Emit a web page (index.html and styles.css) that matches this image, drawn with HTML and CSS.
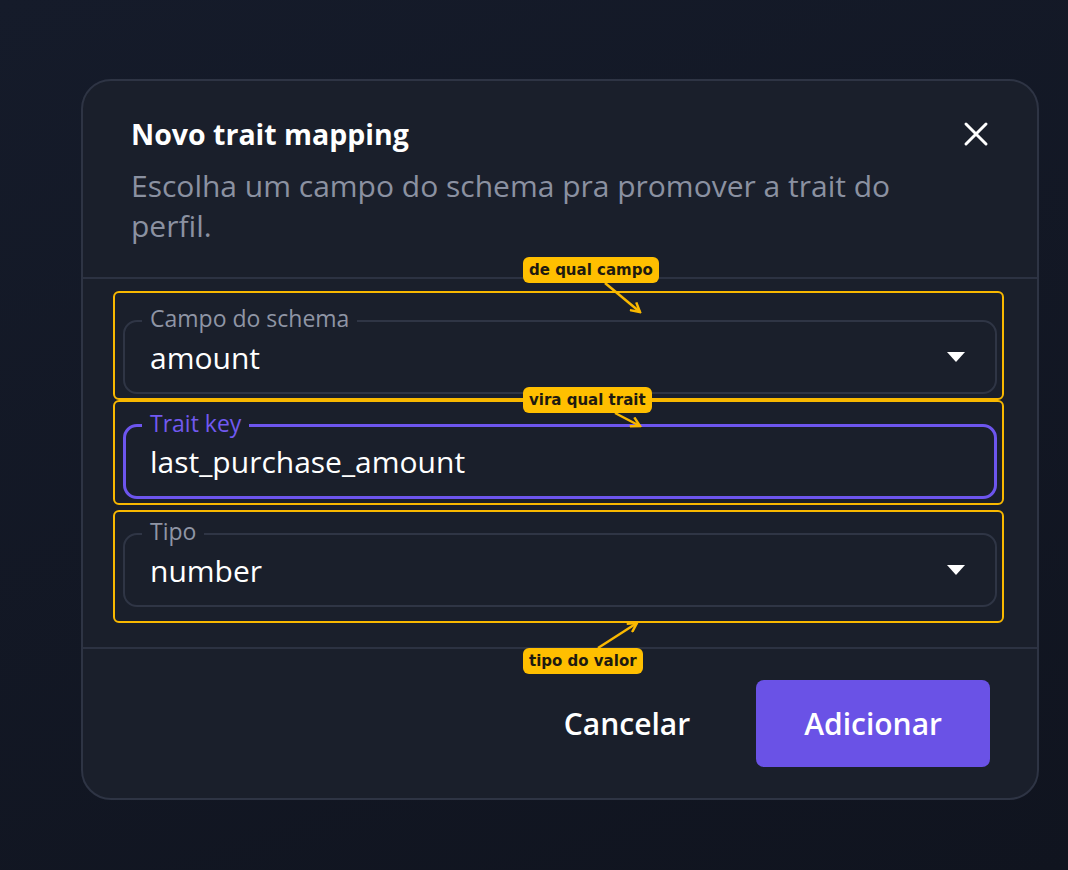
FILE: index.html
```html
<!DOCTYPE html>
<html lang="pt-BR">
<head>
  <meta charset="UTF-8" />
  <meta name="viewport" content="width=device-width, initial-scale=1" />
  <title>Novo trait mapping</title>
  <link rel="stylesheet" href="styles.css">
</head>
<body>
  <div class="dialog">
    <div class="dialog-header">
      <div class="header-text">
        <h2>Novo trait mapping</h2>
        <p>Escolha um campo do schema pra promover a trait do perfil.</p>
      </div>
      <button class="close-btn" aria-label="Fechar">
        <svg width="26" height="26" viewBox="0 0 26 26">
          <path d="M3 3L23 23M23 3L3 23" stroke="#fff" stroke-width="3" stroke-linecap="round" />
        </svg>
      </button>
    </div>

    <div class="dialog-body">
      <div class="highlight first">
        <fieldset class="field">
          <legend>Campo do schema</legend>
          <div class="field-value">amount</div>
          <span class="caret"></span>
        </fieldset>
      </div>

      <div class="highlight second">
        <fieldset class="field focused">
          <legend>Trait key</legend>
          <div class="field-value">last_purchase_amount</div>
        </fieldset>
      </div>

      <div class="highlight third">
        <fieldset class="field">
          <legend>Tipo</legend>
          <div class="field-value">number</div>
          <span class="caret"></span>
        </fieldset>
      </div>
    </div>

    <div class="dialog-footer">
      <button class="btn btn-text">Cancelar</button>
      <button class="btn btn-primary">Adicionar</button>
    </div>

    <!-- annotation layer -->
    <svg class="arrows" width="954" height="717" viewBox="0 0 954 717">
      <defs>
        <marker id="head" markerWidth="12" markerHeight="12" refX="10" refY="6" orient="auto" markerUnits="userSpaceOnUse">
          <path d="M1 1L10 6L1 11" fill="none" stroke="#f9b800" stroke-width="2.5" />
        </marker>
      </defs>
      <line x1="522" y1="202" x2="557" y2="231" stroke="#f9b800" stroke-width="2.5" marker-end="url(#head)" />
      <line x1="532" y1="332" x2="557" y2="345" stroke="#f9b800" stroke-width="2.5" marker-end="url(#head)" />
      <line x1="515" y1="567" x2="554" y2="542" stroke="#f9b800" stroke-width="2.5" marker-end="url(#head)" />
    </svg>
    <span class="note note-1">de qual campo</span>
    <span class="note note-2">vira qual trait</span>
    <span class="note note-3">tipo do valor</span>
  </div>
</body>
</html>
```

FILE: styles.css
```css
html, body {
  margin: 0;
  padding: 0;
}
body {
  font-family: 'Open Sans', 'Noto Sans', sans-serif;
  background: linear-gradient(160deg, #151b2a, #10141f);
  min-height: 870px;
  padding: 79px 0 0 81px;
  box-sizing: border-box;
  color: #fff;
}
.dialog {
  position: relative;
  width: 958px;
  height: 721px;
  box-sizing: border-box;
  background: #1a1f2b;
  border: 2px solid #2e3444;
  border-radius: 30px;
  display: flex;
  flex-direction: column;
}
.dialog-header {
  display: flex;
  justify-content: space-between;
  align-items: flex-start;
  padding: 36px 48px 30px 48px;
  height: 196px;
  box-sizing: border-box;
}
.header-text h2 {
  margin: 0 0 15px;
  font-size: 28.5px;
  line-height: 34px;
  font-weight: 700;
}
.header-text p {
  margin: 0;
  max-width: 800px;
  font-size: 30px;
  line-height: 40px;
  color: #8b91a1;
}
.close-btn {
  background: none;
  border: none;
  padding: 0;
  margin-top: 4px;
  cursor: pointer;
}
.dialog-body {
  border-top: 2px solid #2c3242;
  border-bottom: 2px solid #2c3242;
  height: 372px;
  box-sizing: border-box;
  padding: 12px 33px 0 30px;
}
.highlight {
  border: 2px solid #f9b800;
  border-radius: 6px;
  padding: 0 5px 0 8px;
}
.highlight.first {
  padding-top: 14px;
  padding-bottom: 4px;
}
.highlight.second {
  margin-top: 0;
  padding-top: 10px;
  padding-bottom: 4px;
}
.highlight.third {
  margin-top: 5px;
  padding-top: 8px;
  padding-bottom: 14px;
}
.field {
  margin: 0;
  border: 2px solid #2f3545;
  border-radius: 14px;
  padding: 0 30px 0 17px;
  height: 87px;
  box-sizing: border-box;
  display: flex;
  align-items: center;
  justify-content: space-between;
}
.field legend {
  padding: 0 8px 5px;
  font-size: 23px;
  line-height: 22px;
  color: #8f95a5;
}
.field.focused {
  border: 3px solid #6d55ee;
  padding-left: 16px;
}
.field.focused legend {
  color: #7159f0;
}
.field-value {
  padding-left: 8px;
  font-size: 30px;
  margin-top: -12px;
}
.caret {
  width: 0;
  height: 0;
  border-left: 9px solid transparent;
  border-right: 9px solid transparent;
  border-top: 10px solid #fff;
  margin-top: -12px;
}
.dialog-footer {
  flex: 1;
  display: flex;
  justify-content: flex-end;
  align-items: center;
  gap: 18px;
  padding: 0 47px 0 0;
}
.btn {
  font-family: inherit;
  font-size: 30px;
  font-weight: 600;
  color: #fff;
  border: none;
  border-radius: 8px;
  height: 87px;
  padding: 0 48px;
  cursor: pointer;
  background: none;
}
.btn-primary {
  background: #6a52e6;
}
.arrows {
  position: absolute;
  left: 0;
  top: 0;
  pointer-events: none;
}
.note {
  position: absolute;
  left: 440px;
  height: 26px;
  line-height: 26px;
  padding: 0 6px;
  border-radius: 6px;
  background: #ffbf00;
  color: #1e1a10;
  font-family: 'DejaVu Sans', sans-serif;
  font-size: 15px;
  font-weight: 700;
  white-space: nowrap;
}
.note-1 { top: 176px; }
.note-2 { top: 306px; }
.note-3 { top: 567px; }
```
